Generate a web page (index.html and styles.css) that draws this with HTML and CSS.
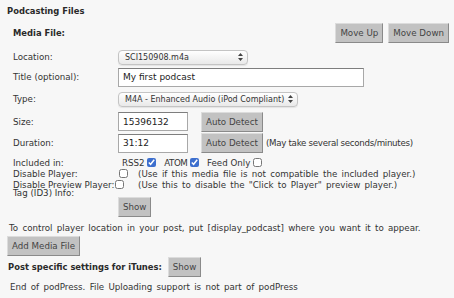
FILE: index.html
```html
<!DOCTYPE html>
<html lang="en">

<head>
    <meta charset="UTF-8">
    <title>Podcasting Files</title>
    <link rel="stylesheet" href="styles.css">
</head>

<body>
    <div class="panel">
        <h3 class="panel-title">Podcasting Files</h3>

        <div class="media-head">
            <strong class="media-title">Media File:</strong>
            <span class="move-buttons">
                <button class="btn">Move Up</button>
                <button class="btn">Move Down</button>
            </span>
        </div>

        <div class="field field-location">
            <span class="field-label">Location:</span>
            <span class="select-wrap select-location">
                <select class="select"><option>SCI150908.m4a</option></select>
                <svg class="select-arrows" width="5" height="8" viewBox="0 0 5 8"><path d="M2.5 0 L5 3 L0 3 Z M0 5 L5 5 L2.5 8 Z" fill="#444"/></svg>
            </span>
        </div>

        <div class="field field-title">
            <span class="field-label">Title (optional):</span>
            <input class="text-input input-title" type="text" value="My first podcast">
        </div>

        <div class="field field-type">
            <span class="field-label">Type:</span>
            <span class="select-wrap select-type">
                <select class="select"><option>M4A - Enhanced Audio (iPod Compliant)</option></select>
                <svg class="select-arrows" width="5" height="8" viewBox="0 0 5 8"><path d="M2.5 0 L5 3 L0 3 Z M0 5 L5 5 L2.5 8 Z" fill="#444"/></svg>
            </span>
        </div>

        <div class="field field-size">
            <span class="field-label">Size:</span>
            <input class="text-input input-small" type="text" value="15396132">
            <button class="btn btn-detect">Auto Detect</button>
        </div>

        <div class="field field-duration">
            <span class="field-label">Duration:</span>
            <input class="text-input input-small" type="text" value="31:12">
            <button class="btn btn-detect">Auto Detect</button>
            <span class="note">(May take several seconds/minutes)</span>
        </div>

        <div class="field field-check">
            <span class="field-label">Included in:</span>
            <span class="feeds">
                RSS2 <input type="checkbox" class="check" checked>
                <span class="feed-name">ATOM</span> <input type="checkbox" class="check" checked>
                Feed Only <input type="checkbox" class="check">
            </span>
        </div>

        <div class="field field-check">
            <span class="field-label">Disable Player:</span>
            <span class="check-cell"><input type="checkbox" class="check"></span>
            <span class="sentence">(Use if this media file is not compatible the included player.)</span>
        </div>

        <div class="field field-check">
            <span class="field-label">Disable Preview Player:</span>
            <span class="check-cell check-cell-tight"><input type="checkbox" class="check"></span>
            <span class="sentence">(Use this to disable the "Click to Player" preview player.)</span>
        </div>

        <div class="field field-tag">
            <span class="field-label">Tag (ID3) Info:</span>
            <button class="btn btn-show">Show</button>
        </div>

        <p class="hint sentence">To control player location in your post, put [display_podcast] where you want it to appear.</p>

        <button class="btn btn-add">Add Media File</button>

        <div class="itunes">
            <strong class="itunes-title">Post specific settings for iTunes:</strong>
            <button class="btn">Show</button>
        </div>

        <p class="footer-note sentence">End of podPress. File Uploading support is not part of podPress</p>
    </div>
</body>

</html>
```

FILE: styles.css
```css
* {
    box-sizing: border-box;
}

body {
    margin: 0;
    background: #f7f7f7;
    color: #333;
    font-family: "DejaVu Sans", Verdana, sans-serif;
    font-size: 8.7px;
}

.panel {
    padding-top: 5px;
}

.panel-title,
.media-title,
.itunes-title {
    font-size: 8.4px;
    font-weight: bold;
    color: #2a2a2a;
}

.panel-title {
    margin: 0 0 0 7px;
    line-height: 12px;
}

/* media file header with the move buttons on the right */
.media-head {
    display: flex;
    justify-content: space-between;
    align-items: center;
    height: 20px;
    margin-top: 6px;
    padding: 0 5px 0 13px;
}

.move-buttons {
    display: flex;
    gap: 5px;
}

.btn {
    height: 20px;
    padding: 0 4px;
    margin: 0;
    background: #c2c2c2;
    border: 1px solid;
    border-color: #dcdcdc #8a8a8a #8a8a8a #dcdcdc;
    color: #444;
    font-family: inherit;
    font-size: 8.7px;
    line-height: 18px;
    cursor: pointer;
}

.sentence {
    word-spacing: 1.5px;
}

.field {
    display: flex;
    align-items: center;
    padding-left: 13px;
    white-space: nowrap;
}

.field-label {
    width: 105px;
    flex: none;
}

.field-location {
    height: 20px;
    margin-top: 4px;
}

.field-title {
    height: 20px;
}

.field-type {
    height: 24px;
}

.field-size {
    height: 21px;
}

.field-duration {
    height: 22px;
}

.field-check {
    height: 11px;
}

.field-duration + .field-check {
    margin-top: 3px;
}

.field-tag {
    align-items: flex-start;
    height: 27px;
}

.field-tag .field-label {
    line-height: 11px;
    margin-top: -2px;
}

.btn-show {
    margin-top: 7px;
}

/* selects with the mac style double arrow */
.select-wrap {
    position: relative;
    display: inline-block;
    height: 15px;
}

.select-location {
    width: 130px;
}

.select-type {
    width: 180px;
}

.select {
    appearance: none;
    width: 100%;
    height: 15px;
    margin: 0;
    padding: 0 12px 0 6px;
    border: 1px solid #c4c4c4;
    border-radius: 4px;
    background: linear-gradient(#ffffff, #e9e9e9);
    box-shadow: 0 1px 1px rgba(0, 0, 0, 0.08);
    color: #333;
    font-family: inherit;
    font-size: 8px;
    line-height: 13px;
}

.select-arrows {
    position: absolute;
    right: 5px;
    top: 3.5px;
}

.text-input {
    height: 19px;
    margin: 0;
    padding: 0 4px;
    background: #fff;
    border: 1px solid #a8a8a8;
    border-top-color: #7e7e7e;
    color: #222;
    font-family: inherit;
    font-size: 9px;
}

.input-title {
    width: 246px;
}

.input-small {
    width: 70px;
}

.btn-detect {
    margin-left: 13px;
}

.note {
    margin-left: 3px;
    letter-spacing: -0.3px;
}

.feeds {
    padding-left: 4px;
}

.feed-name {
    letter-spacing: -0.4px;
}

.check {
    width: 9px;
    height: 9px;
    margin: 0 5px 0 0;
    vertical-align: -1px;
    accent-color: #3d6fce;
}

.check-cell {
    width: 20px;
    flex: none;
}

.check-cell .check {
    margin: 0 0 0 1px;
}

.check-cell-tight {
    width: 24px;
    margin-left: -4px;
}

.hint {
    margin: 5px 0 0 9px;
    line-height: 12px;
}

.btn-add {
    display: block;
    margin: 2px 0 0 7px;
}

.itunes {
    display: flex;
    align-items: center;
    gap: 6px;
    height: 20px;
    margin: 1px 0 0 8px;
}

.footer-note {
    margin: 4px 0 0 10px;
    line-height: 12px;
}
```
